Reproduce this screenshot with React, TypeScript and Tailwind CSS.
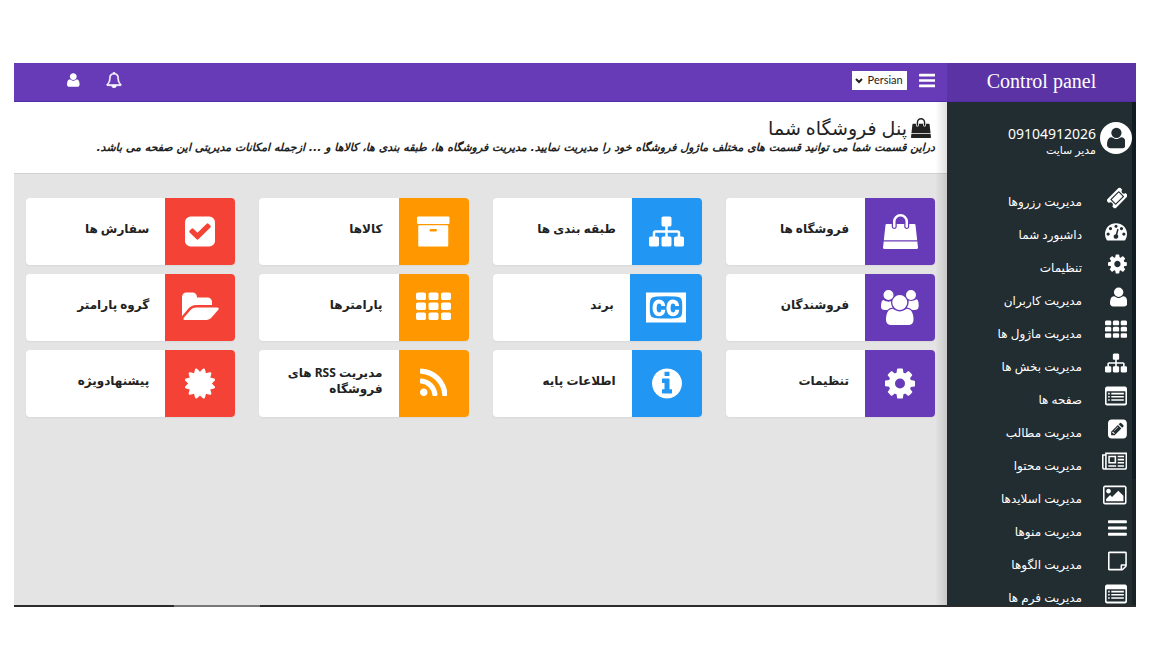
import React from 'react';

interface Glyph {
  box: string;
  d: string;
}

const ICONS = {
  bars: {
    box: '128 0 1536 1792',
    d: 'M1664 1344v128q0 26-19 45t-45 19h-1408q-26 0-45-19t-19-45v-128q0-26 19-45t45-19h1408q26 0 45 19t19 45zm0-512v128q0 26-19 45t-45 19h-1408q-26 0-45-19t-19-45v-128q0-26 19-45t45-19h1408q26 0 45 19t19 45zm0-512v128q0 26-19 45t-45 19h-1408q-26 0-45-19t-19-45v-128q0-26 19-45t45-19h1408q26 0 45 19t19 45z',
  },
  th: {
    box: '0 0 1792 1792',
    d: 'M512 1248v192q0 40-28 68t-68 28h-320q-40 0-68-28t-28-68v-192q0-40 28-68t68-28h320q40 0 68 28t28 68zm0-512v192q0 40-28 68t-68 28h-320q-40 0-68-28t-28-68v-192q0-40 28-68t68-28h320q40 0 68 28t28 68zm640 512v192q0 40-28 68t-68 28h-320q-40 0-68-28t-28-68v-192q0-40 28-68t68-28h320q40 0 68 28t28 68zm-640-1024v192q0 40-28 68t-68 28h-320q-40 0-68-28t-28-68v-192q0-40 28-68t68-28h320q40 0 68 28t28 68zm640 512v192q0 40-28 68t-68 28h-320q-40 0-68-28t-28-68v-192q0-40 28-68t68-28h320q40 0 68 28t28 68zm640 512v192q0 40-28 68t-68 28h-320q-40 0-68-28t-28-68v-192q0-40 28-68t68-28h320q40 0 68 28t28 68zm-640-1024v192q0 40-28 68t-68 28h-320q-40 0-68-28t-28-68v-192q0-40 28-68t68-28h320q40 0 68 28t28 68zm640 512v192q0 40-28 68t-68 28h-320q-40 0-68-28t-28-68v-192q0-40 28-68t68-28h320q40 0 68 28t28 68zm0-512v192q0 40-28 68t-68 28h-320q-40 0-68-28t-28-68v-192q0-40 28-68t68-28h320q40 0 68 28t28 68z',
  },
  user: {
    box: '192 0 1408 1792',
    d: 'M1600 1405q0 120-73 189.5t-194 69.5h-874q-121 0-194-69.5t-73-189.5q0-53 3.5-103.5t14-109 26.5-108.5 43-97.5 62-81 85.5-53.5 111.5-20q9 0 42 21.5t74.5 48 108 48 133.5 21.5 133.5-21.5 108-48 74.5-48 42-21.5q61 0 111.5 20t85.5 53.5 62 81 43 97.5 26.5 108.5 14 109 3.5 103.5zm-320-893q0 159-112.5 271.5t-271.5 112.5-271.5-112.5-112.5-271.5 112.5-271.5 271.5-112.5 271.5 112.5 112.5 271.5z',
  },
  users: {
    box: '0 0 1920 1792',
    d: 'M593 896q-162 5-265 128h-134q-82 0-138-40.5t-56-118.5q0-353 124-353 6 0 43.5 21t97.5 42.5 119 21.5q67 0 133-23-5 37-5 66 0 159 93 293zm1071 637q0 120-73 189.5t-194 69.5h-874q-121 0-194-69.5t-73-189.5q0-53 3.5-103.5t14-109 26.5-108.5 43-97.5 62-81 85.5-53.5 111.5-20q10 0 43 21.5t73 48 107 48 135 21.5 135-21.5 107-48 73-48 43-21.5q61 0 111.5 20t85.5 53.5 62 81 43 97.5 26.5 108.5 14 109 3.5 103.5zm-1024-1277q0 106-75 181t-181 75-181-75-75-181 75-181 181-75 181 75 75 181zm704 384q0 159-112.5 271.5t-271.5 112.5-271.5-112.5-112.5-271.5 112.5-271.5 271.5-112.5 271.5 112.5 112.5 271.5zm576 225q0 78-56 118.5t-138 40.5h-134q-103-123-265-128 93-134 93-293 0-29-5-66 66 23 133 23 59 0 119-21.5t97.5-42.5 43.5-21q124 0 124 353zm-128-609q0 106-75 181t-181 75-181-75-75-181 75-181 181-75 181 75 75 181z',
  },
  sitemap: {
    box: '0 0 1792 1792',
    d: 'M1792 1248v320q0 40-28 68t-68 28h-320q-40 0-68-28t-28-68v-320q0-40 28-68t68-28h96v-192h-512v192h96q40 0 68 28t28 68v320q0 40-28 68t-68 28h-320q-40 0-68-28t-28-68v-320q0-40 28-68t68-28h96v-192h-512v192h96q40 0 68 28t28 68v320q0 40-28 68t-68 28h-320q-40 0-68-28t-28-68v-320q0-40 28-68t68-28h96v-192q0-52 38-90t90-38h512v-192h-96q-40 0-68-28t-28-68v-320q0-40 28-68t68-28h320q40 0 68 28t28 68v320q0 40-28 68t-68 28h-96v192h512q52 0 90 38t38 90v192h96q40 0 68 28t28 68z',
  },
  cog: {
    box: '128 0 1536 1792',
    d: 'M1152 896q0-106-75-181t-181-75-181 75-75 181 75 181 181 75 181-75 75-181zm512-109v222q0 12-8 23t-20 13l-185 28q-19 54-39 91 35 50 107 138 10 12 10 25t-9 23q-27 37-99 108t-94 71q-12 0-26-9l-138-108q-44 23-91 38-16 136-29 186-7 28-36 28h-222q-14 0-24.5-8.5t-11.5-21.5l-28-184q-49-16-90-37l-141 107q-10 9-25 9-14 0-25-11-126-114-165-168-7-10-7-23 0-12 8-23 15-21 51-66.5t54-70.5q-27-50-41-99l-183-27q-13-2-21-12.5t-8-23.5v-222q0-12 8-23t19-13l186-28q14-46 39-92-40-57-107-138-10-12-10-24 0-10 9-23 26-36 98.5-107.5t94.5-71.5q13 0 26 10l138 107q44-23 91-38 16-136 29-186 7-28 36-28h222q14 0 24.5 8.5t11.5 21.5l28 184q49 16 90 37l142-107q9-9 24-9 13 0 25 10 129 119 165 170 7 8 7 22 0 12-8 23-15 21-51 66.5t-54 70.5q26 50 41 98l183 28q13 2 21 12.5t8 23.5z',
  },
  info: {
    box: '128 0 1536 1792',
    d: 'M1152 1376v-160q0-14-9-23t-23-9h-96v-512q0-14-9-23t-23-9h-320q-14 0-23 9t-9 23v160q0 14 9 23t23 9h96v320h-96q-14 0-23 9t-9 23v160q0 14 9 23t23 9h448q14 0 23-9t9-23zm-128-896v-160q0-14-9-23t-23-9h-192q-14 0-23 9t-9 23v160q0 14 9 23t23 9h192q14 0 23-9t9-23zm640 416q0 209-103 385.5t-279.5 279.5-385.5 103-385.5-103-279.5-279.5-103-385.5 103-385.5 279.5-279.5 385.5-103 385.5 103 279.5 279.5 103 385.5z',
  },
  rss: {
    box: '192 0 1408 1792',
    d: 'M576 1344q0 80-56 136t-136 56-136-56-56-136 56-136 136-56 136 56 56 136zm512 123q2 28-17 48-18 21-47 21h-135q-25 0-43-16.5t-20-41.5q-22-229-184.5-391.5t-391.5-184.5q-25-2-41.5-20t-16.5-43v-135q0-29 21-47 17-17 43-17h5q160 13 306 80.5t259 181.5q114 113 181.5 259t80.5 306zm512 2q2 27-18 47-18 20-46 20h-143q-26 0-44.5-17.5t-19.5-42.5q-12-215-101-408.5t-231.5-336-336-231.5-408.5-102q-25-1-42.5-19.5t-17.5-43.5v-143q0-28 20-46 18-18 44-18h3q262 13 501.5 120t425.5 294q187 186 294 425.5t120 501.5z',
  },
  check: {
    box: '128 0 1536 1792',
    d: 'M813 1299l614-614q19-19 19-45t-19-45l-102-102q-19-19-45-19t-45 19l-467 467-211-211q-19-19-45-19t-45 19l-102 102q-19 19-19 45t19 45l358 358q19 19 45 19t45-19zm851-883v960q0 119-84.5 203.5t-203.5 84.5h-960q-119 0-203.5-84.5t-84.5-203.5v-960q0-119 84.5-203.5t203.5-84.5h960q119 0 203.5 84.5t84.5 203.5z',
  },
  archive: {
    box: '64 0 1664 1792',
    d: 'M1088 832q0-26-19-45t-45-19h-256q-26 0-45 19t-19 45 19 45 45 19h256q26 0 45-19t19-45zm576-192v960q0 26-19 45t-45 19h-1408q-26 0-45-19t-19-45v-960q0-26 19-45t45-19h1408q26 0 45 19t19 45zm64-448v256q0 26-19 45t-45 19h-1536q-26 0-45-19t-19-45v-256q0-26 19-45t45-19h1536q26 0 45 19t19 45z',
  },
  folder: {
    box: '0 0 1920 1792',
    d: 'M1879 952q0 31-31 66l-336 396q-43 51-120.5 86.5t-143.5 35.5h-1088q-34 0-60.5-13t-26.5-43q0-31 31-66l336-396q43-51 120.5-86.5t143.5-35.5h1088q34 0 60.5 13t26.5 43zm-343-344v160h-832q-94 0-197 47.5t-164 119.5l-337 396-5 6q0-4-.5-12.5t-.5-12.5v-960q0-92 66-158t158-66h320q92 0 158 66t66 158v32h544q92 0 158 66t66 158z',
  },
  certificate: {
    box: '128 0 1536 1792',
    d: 'M1504 896l138 135q30 28 20 70-12 41-52 51l-188 48 53 186q12 41-19 70-29 31-70 19l-186-53-48 188q-10 40-51 52-12 2-19 2-31 0-51-22l-135-138-135 138q-28 30-70 20-41-11-51-52l-48-188-186 53q-41 12-70-19-31-29-19-70l53-186-188-48q-40-10-52-51-10-42 20-70l138-135-138-135q-30-28-20-70 12-41 52-51l188-48-53-186q-12-41 19-70 29-31 70-19l186 53 48-188q10-41 51-51 41-12 70 19l135 139 135-139q29-30 70-19 41 10 51 51l48 188 186-53q41-12 70 19 31 29 19 70l-53 186 188 48q40 10 52 51 10 42-20 70z',
  },
  bag: {
    box: '0 0 1792 1792',
    d: 'M1757 1408l35 313q3 28-16 50-19 21-48 21h-1664q-29 0-48-21-19-22-16-50l35-313h1722zm-93-839l86 775h-1708l86-775q3-24 21-40.5t43-16.5h256v128q0 53 37.5 90.5t90.5 37.5 90.5-37.5 37.5-90.5v-128h384v128q0 53 37.5 90.5t90.5 37.5 90.5-37.5 37.5-90.5v-128h256q25 0 43 16.5t21 40.5zm-384-185v256q0 26-19 45t-45 19-45-19-19-45v-256q0-106-75-181t-181-75-181 75-75 181v256q0 26-19 45t-45 19-45-19-19-45v-256q0-159 112.5-271.5t271.5-112.5 271.5 112.5 112.5 271.5z',
  },
  bell: {
    box: '0 0 1792 1792',
    d: 'M912 1696q0-16-16-16-59 0-101.5-42.5t-42.5-101.5q0-16-16-16t-16 16q0 73 51.5 124.5t124.5 51.5q16 0 16-16zm-666-288h1300q-266-300-266-832 0-51-24-105t-69-103-121.5-80.5-169.5-31.5-169.5 31.5-121.5 80.5-69 103-24 105q0 532-266 832zm1482 0q0 52-38 90t-90 38h-448q0 106-75 181t-181 75-181-75-75-181h-448q-52 0-90-38t-38-90q50-42 91-88t85-119.5 74.5-158.5 50-206 19.5-260q0-152 117-282.5t307-158.5q-8-19-8-39 0-40 28-68t68-28 68 28 28 68q0 20-8 39 190 28 307 158.5t117 282.5q0 139 19.5 260t50 206 74.5 158.5 85 119.5 91 88z',
  },
  picture: {
    box: '-64 0 1920 1792',
    d: 'M576 576q0 80-56 136t-136 56-136-56-56-136 56-136 136-56 136 56 56 136zm1024 384v448h-1408v-192l320-320 160 160 512-512zm96-704h-1600q-13 0-22.5 9.5t-9.5 22.5v1216q0 13 9.5 22.5t22.5 9.5h1600q13 0 22.5-9.5t9.5-22.5v-1216q0-13-9.5-22.5t-22.5-9.5zm160 32v1216q0 66-47 113t-113 47h-1600q-66 0-113-47t-47-113v-1216q0-66 47-113t113-47h1600q66 0 113 47t47 113z',
  },
  newspaper: {
    box: '0 0 2048 1792',
    d: 'M1024 512h-384v384h384v-384zm128 640v128h-640v-128h640zm0-768v640h-640v-640h640zm640 768v128h-512v-128h512zm0-256v128h-512v-128h512zm0-256v128h-512v-128h512zm0-256v128h-512v-128h512zm-1536 960v-960h-128v960q0 26 19 45t45 19 45-19 19-45zm1664 0v-1088h-1536v1088q0 33-11 64h1483q26 0 45-19t19-45zm128-1216v1216q0 80-56 136t-136 56h-1664q-80 0-136-56t-56-136v-1088h256v-128h1792z',
  },
  ticket: {
    box: '64 0 1664 1792',
    d: 'M1024 452l316 316-572 572-316-316zm-211 979l618-618q19-19 19-45t-19-45l-362-362q-18-18-45-18t-45 18l-618 618q-19 19-19 45t19 45l362 362q18 18 45 18t45-18zm889-637l-907 908q-37 37-90.5 37t-90.5-37l-126-126q56-56 56-136t-56-136-136-56-136 56l-125-126q-37-37-37-90.5t37-90.5l907-906q37-37 90.5-37t90.5 37l125 125q-56 56-56 136t56 136 136 56 136-56l126 125q37 37 37 90.5t-37 90.5z',
  },
  gauge: {
    box: '0 0 1792 1792',
    d: 'M384 1152q0-53-37.5-90.5t-90.5-37.5-90.5 37.5-37.5 90.5 37.5 90.5 90.5 37.5 90.5-37.5 37.5-90.5zm192-448q0-53-37.5-90.5t-90.5-37.5-90.5 37.5-37.5 90.5 37.5 90.5 90.5 37.5 90.5-37.5 37.5-90.5zm428 481l101-382q6-26-7.5-48.5t-38.5-29.5-48 6.5-30 39.5l-101 382q-60 5-107 43.5t-63 98.5q-20 77 20 146t117 89 146-20 89-117q16-60-6-117t-72-91zm660-33q0-53-37.5-90.5t-90.5-37.5-90.5 37.5-37.5 90.5 37.5 90.5 90.5 37.5 90.5-37.5 37.5-90.5zm-640-640q0-53-37.5-90.5t-90.5-37.5-90.5 37.5-37.5 90.5 37.5 90.5 90.5 37.5 90.5-37.5 37.5-90.5zm448 192q0-53-37.5-90.5t-90.5-37.5-90.5 37.5-37.5 90.5 37.5 90.5 90.5 37.5 90.5-37.5 37.5-90.5zm320 448q0 261-141 483-19 29-54 29h-1402q-35 0-54-29-141-221-141-483 0-182 71-348t191-286 286-191 348-71 348 71 286 191 191 286 71 348z',
  },
  list: {
    box: '0 0 1792 1792',
    d: 'M160 128h1472q66 0 113 47t47 113v1216q0 66-47 113t-113 47h-1472q-66 0-113-47t-47-113v-1216q0-66 47-113t113-47zm0 384q-32 0-32 32v928q0 32 32 32h1472q32 0 32-32v-928q0-32-32-32zm96 128h128v128h-128zm256 0h1024v128h-1024zm-256 256h128v128h-128zm256 0h1024v128h-1024zm-256 256h128v128h-128zm256 0h1024v128h-1024z',
  },
  pencil: {
    box: '0 0 1536 1792',
    d: 'M404 1108l152 152-52 52h-56v-96h-96v-56zm414-390q14 13-3 30l-291 291q-17 17-30 3-14-13 3-30l291-291q17-17 30-3zm-274 690l544-544-288-288-544 544v288h288zm608-608l92-92q28-28 28-68t-28-68l-152-152q-28-28-68-28t-68 28l-92 92zm384-384v960q0 119-84.5 203.5t-203.5 84.5h-960q-119 0-203.5-84.5t-84.5-203.5v-960q0-119 84.5-203.5t203.5-84.5h960q119 0 203.5 84.5t84.5 203.5z',
  },
  note: {
    box: '0 0 1536 1792',
    d: 'M1400 1280h-248v248q29-10 41-22l185-185q12-12 22-41zm-280-128h288v-896h-1280v1280h896v-288q0-40 28-68t68-28zm416-928v1024q0 40-20 88t-48 76l-184 184q-28 28-76 48t-88 20h-1024q-40 0-68-28t-28-68v-1344q0-40 28-68t68-28h1344q40 0 68 28t28 68z',
  },
  cc: {
    box: '0 0 2048 1792',
    d: 'M785 1008h207q-14 158-98.5 248.5t-214.5 90.5q-162 0-254.5-116t-92.5-316q0-194 93-311.5t233-117.5q148 0 232 87t97 247h-203q-5-64-35.5-99t-81.5-35q-57 0-88.5 60.5t-31.5 177.5q0 48 5 84t18 69.5 40 51.5 66 18q95 0 109-139zm712 0h206q-14 158-98 248.5t-214 90.5q-162 0-254.5-116t-92.5-316q0-194 93-311.5t233-117.5q148 0 232 87t97 247h-204q-4-64-35-99t-81-35q-57 0-88.5 60.5t-31.5 177.5q0 48 5 84t18 69.5 39.5 51.5 65.5 18q49 0 76.5-38t33.5-101zm359-119q0-207-15.5-307t-60.5-161q-6-8-13.5-14t-21.5-15-16-11q-86-63-697-63-625 0-710 63-5 4-17.5 11.5t-21 14-14.5 14.5q-45 60-60 159.5t-15 308.5q0 208 15 307.5t60 160.5q6 8 15 15t20.5 14 17.5 12q44 33 239.5 49t470.5 16q610 0 697-65 5-4 17-11t20.5-14 13.5-16q46-60 61-159t15-309zm192-761v1536h-2048v-1536h2048z',
  },
} satisfies Record<string, Glyph>;

type IconName = keyof typeof ICONS;

const Icon: React.FC<{ name: IconName; className: string }> = ({ name, className }) => (
  <svg viewBox={ICONS[name].box} className={`w-auto shrink-0 ${className}`} fill="currentColor" fillRule="evenodd" aria-hidden="true">
    <path d={ICONS[name].d} />
  </svg>
);

const MENU: { icon: IconName; label: string }[] = [
  { icon: 'ticket', label: 'مدیریت رزروها' },
  { icon: 'gauge', label: 'داشبورد شما' },
  { icon: 'cog', label: 'تنظیمات' },
  { icon: 'user', label: 'مدیریت کاربران' },
  { icon: 'th', label: 'مدیریت ماژول ها' },
  { icon: 'sitemap', label: 'مدیریت بخش ها' },
  { icon: 'list', label: 'صفحه ها' },
  { icon: 'pencil', label: 'مدیریت مطالب' },
  { icon: 'newspaper', label: 'مدیریت محتوا' },
  { icon: 'picture', label: 'مدیریت اسلایدها' },
  { icon: 'bars', label: 'مدیریت منوها' },
  { icon: 'note', label: 'مدیریت الگوها' },
  { icon: 'list', label: 'مدیریت فرم ها' },
];

const PURPLE = 'bg-[#673ab7]';
const BLUE = 'bg-[#2196f3]';
const ORANGE = 'bg-[#ff9800]';
const RED = 'bg-[#f44336]';

const CARDS: { icon: IconName; label: string; color: string }[] = [
  { icon: 'bag', label: 'فروشگاه ها', color: PURPLE },
  { icon: 'sitemap', label: 'طبقه بندی ها', color: BLUE },
  { icon: 'archive', label: 'کالاها', color: ORANGE },
  { icon: 'check', label: 'سفارش ها', color: RED },
  { icon: 'users', label: 'فروشندگان', color: PURPLE },
  { icon: 'cc', label: 'برند', color: BLUE },
  { icon: 'th', label: 'پارامترها', color: ORANGE },
  { icon: 'folder', label: 'گروه پارامتر', color: RED },
  { icon: 'cog', label: 'تنظیمات', color: PURPLE },
  { icon: 'info', label: 'اطلاعات پایه', color: BLUE },
  { icon: 'rss', label: 'مدیریت RSS های فروشگاه', color: ORANGE },
  { icon: 'certificate', label: 'پیشنهادویژه', color: RED },
];

const Sidebar = () => (
  <aside className="flex w-[189px] shrink-0 flex-col bg-[#222d32] text-white">
    <div className="flex h-[39px] shrink-0 items-center justify-center border-b border-[#512da8] bg-[#5c33a4] pb-0.5 font-['Liberation_Serif',serif] text-xl">
      Control panel
    </div>
    <div className="flex min-h-0 grow">
      {/* scroll track */}
      <div className="w-1 shrink-0 bg-[#1a2226]">
        <div className="h-3/4 bg-[#111b22]" />
      </div>
      <div className="min-w-0 grow overflow-hidden">
        <div className="flex h-[79px] items-start gap-1 pt-5">
          <span className="flex size-8 shrink-0 items-center justify-center rounded-full bg-white text-[#222d32]">
            <Icon name="user" className="h-6" />
          </span>
          <div className="pt-1">
            <div className="text-[14px] leading-4">09104912026</div>
            <div className="text-[11px] leading-4">مدیر سایت</div>
          </div>
        </div>
        <nav>
          {MENU.map(item => (
            <a key={item.label} href="#" className="flex h-[33px] items-center pr-[5px]">
              <span className="flex w-[45px] shrink-0">
                <Icon name={item.icon} className="h-[22px]" />
              </span>
              <span className="pt-2 text-xs leading-4">{item.label}</span>
            </a>
          ))}
        </nav>
      </div>
    </div>
  </aside>
);

const TopBar = () => (
  <header className="flex h-[39px] shrink-0 items-center border-b border-[#512da8] bg-[#673ab7] pr-3 pb-1 pl-[53px] text-white">
    <button type="button" aria-label="منو" className="flex">
      <Icon name="bars" className="h-[19px]" />
    </button>
    <div className="relative mr-3 flex">
      <select aria-label="زبان" className="h-[19px] w-[55px] appearance-none bg-white pr-1 text-right font-[Lato,sans-serif] text-[11px] leading-4 text-[#222]">
        <option>Persian</option>
      </select>
      <svg viewBox="0 0 8 6" className="pointer-events-none absolute top-[7px] left-[3px] w-2 text-[#222]" fill="none" stroke="currentColor" strokeWidth="2" aria-hidden="true">
        <path d="M1 1l3 3 3-3" />
      </svg>
    </div>
    <div className="mr-auto flex items-center gap-[26px]">
      <button type="button" aria-label="اعلان ها" className="flex">
        <Icon name="bell" className="h-4 stroke-current stroke-[60px]" />
      </button>
      <button type="button" aria-label="حساب کاربری" className="flex">
        <Icon name="user" className="h-4" />
      </button>
    </div>
  </header>
);

const App = () => (
  <div dir="rtl" className="flex h-screen flex-col bg-white px-[14px] py-[63px] font-['Noto_Sans','DejaVu_Sans',sans-serif]">
    <div className="flex min-h-0 grow overflow-hidden">
      <Sidebar />
      <div className="flex min-w-0 grow flex-col">
        <TopBar />
        <main className="relative grow bg-[#e4e4e4]">
          {/* shade cast by the sidebar */}
          <div className="pointer-events-none absolute inset-y-0 right-0 w-3 bg-linear-to-l from-black/12 to-transparent" />
          <section className="h-[72px] border-b border-[#d2d2d2] bg-white px-3 pt-3 text-[#222]">
            <h1 className="flex items-center gap-1 pr-1 text-[19px] leading-7">
              <Icon name="bag" className="h-5" />
              پنل فروشگاه شما
            </h1>
            <p className="font-['DejaVu_Sans',sans-serif] text-[11px] leading-3 font-bold whitespace-nowrap italic">
              دراین قسمت شما می توانید قسمت های مختلف ماژول فروشگاه خود را مدیریت نمایید. مدیریت فروشگاه ها، طبقه بندی ها، کالاها و ... ازجمله امکانات مدیریتی این صفحه می باشد.
            </p>
          </section>
          <div className="grid grid-cols-4 gap-x-6 gap-y-[9px] px-3 pt-6">
            {CARDS.map(card => (
              <a key={card.label} href="#" className="flex h-[67px] overflow-hidden rounded-sm bg-white shadow-xs">
                <span className={`flex min-w-[70px] shrink-0 items-center justify-center px-4 text-white ${card.color}`}>
                  <Icon name={card.icon} className="h-[35px]" />
                </span>
                <span className="grow self-center px-4 pb-1.5 text-xs leading-4 font-bold text-[#222]">{card.label}</span>
              </a>
            ))}
          </div>
        </main>
      </div>
    </div>
    <div className="flex h-[2px] shrink-0 bg-[#2b2b2b]">
      <div className="mr-auto ml-[160px] w-[86px] bg-[#777]" />
    </div>
  </div>
);

export default App;
